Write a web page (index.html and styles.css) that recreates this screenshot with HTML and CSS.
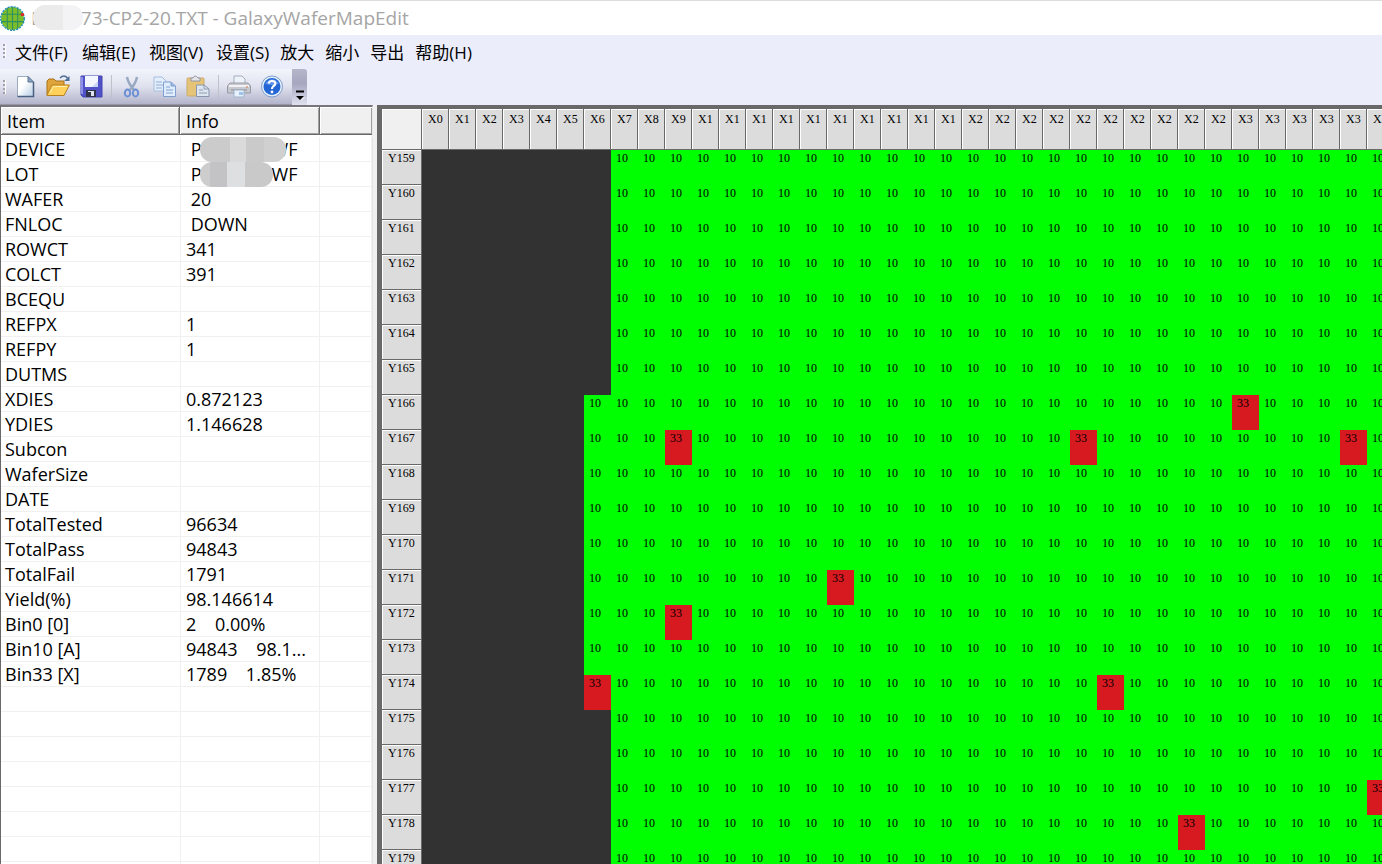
FILE: index.html
```html
<!DOCTYPE html>
<html lang="zh-CN">
<head>
    <meta charset="UTF-8">
    <meta name="viewport" content="width=device-width, initial-scale=1.0">
    <title>GalaxyWaferMapEdit</title>
    <link rel="stylesheet" href="styles.css">
</head>
<body>

    <header class="titlebar">
        <svg class="logo" viewBox="0 0 24 24">
            <circle cx="12" cy="12" r="11" fill="#79bd2b"/>
            <path d="M7 2V22M12 1V23M17 2V22M2 8H22M1 15H23" stroke="#2f8f62" stroke-width="1" fill="none"/>
            <circle cx="12" cy="12" r="11.3" fill="none" stroke="#1687b8" stroke-width="1.2" stroke-dasharray="2 1"/>
            <rect x="20" y="7" width="3" height="2.5" fill="#e02020"/>
        </svg>
        <h1>D<span class="hidden-name"></span>73-CP2-20.TXT - GalaxyWaferMapEdit</h1>
    </header>

    <nav class="menubar">
        <span class="grip"></span>
        <button class="wide">文件(F)</button>
        <button class="wide">编辑(E)</button>
        <button class="wide">视图(V)</button>
        <button>设置(S)</button>
        <button>放大</button>
        <button>缩小</button>
        <button>导出</button>
        <button>帮助(H)</button>
    </nav>

    <div class="toolbar-row">
        <div class="toolbar">
            <span class="grip"></span>
            <div class="group">
                <button aria-label="新建">
                    <svg viewBox="0 0 24 24">
                        <defs><linearGradient id="page" x1="0" y1="0" x2="1" y2="1"><stop offset=".4" stop-color="#fff"/><stop offset="1" stop-color="#b4cce4"/></linearGradient></defs>
                        <path d="M4.500 1.500H15L20.500 7V21.500H4.500Z" fill="url(#page)" stroke="#9aabc2"/>
                        <path d="M20.500 7V21.500H4.500" fill="none" stroke="#4a6080" stroke-width="1.500"/>
                        <path d="M15 1.500V7H20.500Z" fill="#8da9c8" stroke="#56708f"/>
                    </svg>
                </button>
                <button aria-label="打开">
                    <svg viewBox="0 0 24 24">
                        <path d="M1 20V6L3 4H8L10 6H18V20Z" fill="#dfa43b" stroke="#a77316"/>
                        <path d="M1 20L6 10H23.500L18 20.500H1Z" fill="#ffd05a" stroke="#b9801e"/>
                        <path d="M4 18L7.500 11.500H21" stroke="#fff0ad" fill="none"/>
                        <path d="M14 3Q18 -1 21.500 3" fill="none" stroke="#526f96" stroke-width="1.500"/>
                        <path d="M23.500 1V6H18Z" fill="#526f96"/>
                    </svg>
                </button>
                <button aria-label="保存">
                    <svg viewBox="0 0 24 24">
                        <path d="M2 1H23V22H4L2 20Z" fill="#5152c8" stroke="#4344b0"/>
                        <path d="M3 2V19" stroke="#8c90ec" stroke-width="2"/>
                        <rect x="6" y="1" width="13" height="11" fill="#f3f7ff"/>
                        <path d="M13 12L19 6V12Z" fill="#c8d8f4"/>
                        <rect x="7" y="15" width="10" height="7" fill="#303448"/>
                        <rect x="9" y="16" width="6" height="5" fill="#dfe5ef"/>
                        <rect x="9" y="17" width="3" height="4" fill="#303448"/>
                    </svg>
                </button>
            </div>
            <span class="separator"></span>
            <div class="group">
                <button aria-label="剪切">
                    <svg viewBox="0 0 24 24">
                        <path d="M7 2Q8 8 14 15M17 2Q16 8 10 15" stroke="#99a9c1" stroke-width="2.500" fill="none"/>
                        <ellipse cx="7.500" cy="18" rx="2.700" ry="3.500" fill="none" stroke="#6d91d4" stroke-width="2"/>
                        <ellipse cx="15.500" cy="18" rx="2.700" ry="3.500" fill="none" stroke="#6d91d4" stroke-width="2"/>
                    </svg>
                </button>
                <button aria-label="复制">
                    <svg viewBox="0 0 24 24">
                        <path d="M1 2H9L13 6V16H1Z" fill="#e5effc" stroke="#a5bcdf"/>
                        <path d="M3 7H9M3 10H10M3 13H9" stroke="#8eabd7"/>
                        <path d="M10.500 7H18L22.500 11V21.500H10.500Z" fill="#e0edfc" stroke="#7f9fce"/>
                        <path d="M18 7V11H22.500" fill="#9bb7de" stroke="#7f9fce"/>
                        <path d="M13 12H17M13 15H20M13 18H20" stroke="#80a2d3"/>
                    </svg>
                </button>
                <button aria-label="粘贴">
                    <svg viewBox="0 0 24 24">
                        <rect x="1" y="3" width="17" height="18" rx="1" fill="#e5c477" stroke="#c9ab6d"/>
                        <path d="M5 6V3H7Q9 -1 12 3H14V6Z" fill="#e3e5e8" stroke="#9398a4"/>
                        <path d="M10.500 10H18L23 14V21.500H10.500Z" fill="#dce5f0" stroke="#8795ad"/>
                        <path d="M18 10V14H23M13 15H17M13 18H21" stroke="#8e9cb2" fill="none"/>
                    </svg>
                </button>
            </div>
            <span class="separator"></span>
            <div class="group">
                <button aria-label="打印">
                    <svg viewBox="0 0 24 24">
                        <path d="M7 9V1H15L18 4V9Z" fill="#eef3fa" stroke="#a4adba"/>
                        <path d="M3 8H21L23.500 11V18H.500V11Z" fill="#c8c9cf" stroke="#969aa5"/>
                        <path d="M2 11H22" stroke="#f2f2f4" stroke-width="2"/>
                        <path d="M4 15H20" stroke="#858996"/>
                        <path d="M7 15H17V22H7Z" fill="#e6f1fc" stroke="#a0b2cb"/>
                        <rect x="12" y="17" width="4" height="3" fill="#9fc4e8"/>
                        <circle cx="20" cy="12" r="1" fill="#d29a75"/>
                    </svg>
                </button>
                <button aria-label="帮助">
                    <svg viewBox="0 0 24 24">
                        <circle cx="12" cy="11.500" r="10.500" fill="#e4effc" stroke="#7c9dcd"/>
                        <circle cx="12" cy="11.500" r="8.500" fill="#2467d4"/>
                        <path d="M5 8.500Q12 0 19 8.500Q12 11.500 5 8.500" fill="#5b94eb"/>
                        <path d="M8.800 8.500Q9 6 12 6Q15.500 6 15.300 8.800Q15 10.500 13 11.500Q12 12.300 12 14" fill="none" stroke="#fff" stroke-width="2.200"/>
                        <circle cx="12" cy="17" r="1.400" fill="#fff"/>
                    </svg>
                </button>
            </div>
        </div>
        <button class="more" aria-label="工具栏选项">
            <svg viewBox="0 0 10 12"><path d="M1 1.500H9" stroke="#000" stroke-width="2"/><path d="M1 6H9L5 10Z" fill="#000"/><path d="M6 10.500L9.500 7" stroke="#fff"/></svg>
        </button>
    </div>

    <main>
        <section class="info-panel">
            <table class="info">
                <thead>
                    <tr><th>Item</th><th>Info</th><th></th></tr>
                </thead>
                <tbody>
                    <tr><td>DEVICE</td><td>&nbsp;P<span class="mask"></span>WF</td><td></td></tr>
                    <tr><td>LOT</td><td>&nbsp;P<span class="mask short"></span>WF</td><td></td></tr>
                    <tr><td>WAFER</td><td>&nbsp;20</td><td></td></tr>
                    <tr><td>FNLOC</td><td>&nbsp;DOWN</td><td></td></tr>
                    <tr><td>ROWCT</td><td>341</td><td></td></tr>
                    <tr><td>COLCT</td><td>391</td><td></td></tr>
                    <tr><td>BCEQU</td><td></td><td></td></tr>
                    <tr><td>REFPX</td><td>1</td><td></td></tr>
                    <tr><td>REFPY</td><td>1</td><td></td></tr>
                    <tr><td>DUTMS</td><td></td><td></td></tr>
                    <tr><td>XDIES</td><td>0.872123</td><td></td></tr>
                    <tr><td>YDIES</td><td>1.146628</td><td></td></tr>
                    <tr><td>Subcon</td><td></td><td></td></tr>
                    <tr><td>WaferSize</td><td></td><td></td></tr>
                    <tr><td>DATE</td><td></td><td></td></tr>
                    <tr><td>TotalTested</td><td>96634</td><td></td></tr>
                    <tr><td>TotalPass</td><td>94843</td><td></td></tr>
                    <tr><td>TotalFail</td><td>1791</td><td></td></tr>
                    <tr><td>Yield(%)</td><td>98.146614</td><td></td></tr>
                    <tr><td>Bin0 [0]</td><td>2&nbsp;&nbsp;&nbsp;&nbsp;0.00%</td><td></td></tr>
                    <tr><td>Bin10 [A]</td><td>94843&nbsp;&nbsp;&nbsp;&nbsp;98.1...</td><td></td></tr>
                    <tr><td>Bin33 [X]</td><td>1789&nbsp;&nbsp;&nbsp;&nbsp;1.85%</td><td></td></tr>
                    <tr><td></td><td></td><td></td></tr>
                    <tr><td></td><td></td><td></td></tr>
                    <tr><td></td><td></td><td></td></tr>
                    <tr><td></td><td></td><td></td></tr>
                    <tr><td></td><td></td><td></td></tr>
                    <tr><td></td><td></td><td></td></tr>
                    <tr><td></td><td></td><td></td></tr>
                    <tr><td></td><td></td><td></td></tr>
                </tbody>
            </table>
        </section>

        <section class="map-panel">
            <table class="wafer" id="wafer"></table>
        </section>
    </main>

    <script src="wafer.js"></script>
</body>
</html>
```

FILE: styles.css
```css
* {
    box-sizing: border-box;
}

body {
    font-family: "Open Sans", "Noto Sans CJK SC", sans-serif;
    margin: 0;
    height: 100vh;
    display: flex;
    flex-direction: column;
    overflow: hidden;
    background-color: #ebedfa;
    color: #000;
}

button {
    border: 0;
    padding: 0;
    background: none;
    font: inherit;
    color: inherit;
}

svg {
    display: block;
}

.titlebar {
    height: 35px;
    flex: none;
    display: flex;
    align-items: center;
    gap: 6px;
    background-color: #fff;
    border-top: 1px solid #dcdcdc;
}

.logo {
    width: 25px;
    height: 25px;
}

.titlebar h1 {
    margin: 0;
    font-size: 19px;
    font-weight: normal;
    color: #a5a5a5;
    white-space: nowrap;
}

.hidden-name {
    display: inline-block;
    position: relative;
    width: 36px;
}

.hidden-name::before {
    content: "";
    position: absolute;
    left: -12px;
    top: -20px;
    width: 50px;
    height: 25px;
    border-radius: 12px;
    background: linear-gradient(to right, #ebebeb 60%, #f3f3f5 60%);
}

.menubar {
    height: 34px;
    flex: none;
    display: flex;
    align-items: center;
    padding-bottom: 2px;
    font-size: 17px;
}

.menubar .grip {
    margin-right: 9px;
}

.menubar button {
    white-space: nowrap;
    text-align: left;
    margin-right: 11px;
}

.menubar .wide {
    width: 67px;
    margin-right: 0;
}

.grip {
    width: 3px;
    height: 14px;
    margin-left: 3px;
    background: repeating-linear-gradient(#a0a0a8 0 2px, transparent 2px 4px);
    border-right: 1px solid #fff;
}

.toolbar-row {
    height: 36px;
    flex: none;
    display: flex;
}

.toolbar {
    display: flex;
    align-items: center;
    width: 292px;
    background: linear-gradient(#f3f5fc, #dfe1ee 50%, #b3b4cb);
    border-bottom: 1px solid #9797a7;
}

.toolbar .group {
    display: flex;
    gap: 9px;
}

.toolbar .grip + .group {
    margin-left: 7px;
}

.toolbar svg {
    width: 24px;
    height: 24px;
}

.separator {
    width: 1px;
    height: 23px;
    margin: 0 8px;
    background-color: #bfc0c8;
}

.more {
    width: 15px;
    display: flex;
    align-items: flex-end;
    justify-content: center;
    padding-bottom: 3px;
    background: linear-gradient(#b5b6c9, #a6a7c0 40%, #dfe0ef);
    border-radius: 0 3px 0 0;
}

.more svg {
    width: 10px;
    height: 12px;
}

main {
    flex: 1;
    min-height: 0;
    display: flex;
    gap: 4px;
    background-color: #f0f0f0;
}

.info-panel {
    width: 373px;
    flex: none;
    overflow: hidden;
    background-color: #fff;
    border-top: 2px solid #77777b;
    border-left: 1px solid #696969;
    border-right: 1px solid #e6e6e6;
}

.info {
    width: 100%;
    table-layout: fixed;
    border-collapse: separate;
    border-spacing: 0;
    font-size: 18px;
    line-height: 24px;
}

/* small gap between the header and the first row */
.info tbody::before {
    content: "";
    display: block;
    height: 2px;
}

.info th {
    height: 28px;
    padding: 0 6px;
    background-color: #f0f0f0;
    border-right: 1px solid #696969;
    border-bottom: 1px solid #696969;
    box-shadow: inset 1px 1px #fff, inset -1px -1px #a0a0a0;
    font-weight: normal;
    text-align: left;
}

.info th:nth-child(1) {
    width: 179px;
}

.info th:nth-child(2) {
    width: 140px;
}

.info th:last-child {
    border-right: 0;
}

.info td {
    height: 25px;
    padding: 0 4px;
    border-right: 1px solid #f0f0f0;
    border-bottom: 1px solid #f0f0f0;
    white-space: nowrap;
}

.info td:first-child {
    border-right: 0;
}

.info td:nth-child(2) {
    padding-left: 5px;
    border-left: 1px solid #f0f0f0;
}

.mask {
    display: inline-block;
    position: relative;
    width: 70px;
}

/* smudges over the customer's device and lot names */
.mask::before {
    content: "";
    position: absolute;
    left: -2px;
    top: -19px;
    width: 86px;
    height: 25px;
    border-radius: 12px;
    background: linear-gradient(to right, #cbcbcb 30px, #dadada 30px 46px, #cacaca 46px 64px, #d0d0d0 64px);
}

.mask.short::before {
    width: 73px;
    background: linear-gradient(to right, #cdcdcd 10px, #c3c3c5 10px 27px, #dddfe1 27px 45px, #c9c9c9 45px);
}

.map-panel {
    flex: 1;
    min-width: 0;
    overflow: hidden;
    background-color: #fff;
    border-top: 4px solid #696969;
    border-left: 5px solid #696969;
}

.wafer {
    table-layout: fixed;
    border-collapse: separate;
    border-spacing: 0;
    font-family: "Liberation Serif", serif;
    font-size: 12px;
    line-height: 16px;
}

.wafer th,
.wafer td {
    padding: 0 0 0 5px;
    height: 35px;
    vertical-align: top;
    text-align: left;
    font-weight: normal;
}

.wafer th {
    padding-left: 6px;
    background-color: #dcdcdc;
    border-right: 1px solid #696969;
    border-bottom: 1px solid #696969;
    box-shadow: inset 1px 1px #fff;
}

.wafer thead th {
    width: 27px;
    height: 41px;
    padding-top: 2px;
}

.wafer thead .corner {
    width: 40px;
    background-color: #f0f0f0;
}

.wafer .pass {
    background-color: #00ff00;
}

.wafer .fail {
    background-color: #d71920;
}

.wafer .none {
    background-color: #323232;
}
```

FILE: wafer.js
```js
const COLUMNS = 36;
const FIRST_ROW = 159;
const LAST_ROW = 179;

// failed dies: row number -> columns
const fails = {
    166: [30],
    167: [9, 24, 34],
    171: [15],
    172: [9],
    174: [6, 25],
    177: [35],
    178: [28]
};

let html = '<thead><tr><th class="corner"></th>';
for (let x = 0; x < COLUMNS; x++) {
    html += `<th>${("X" + x).slice(0, 2)}</th>`;
}
html += "</tr></thead><tbody>";

for (let y = FIRST_ROW; y <= LAST_ROW; y++) {
    const start = y >= 166 && y <= 174 ? 6 : 7;
    html += `<tr><th>Y${y}</th>`;
    for (let x = 0; x < COLUMNS; x++) {
        if (x < start) {
            html += '<td class="none"></td>';
        } else if (fails[y] && fails[y].includes(x)) {
            html += '<td class="fail">33</td>';
        } else {
            html += '<td class="pass">10</td>';
        }
    }
    html += "</tr>";
}

const wafer = document.getElementById("wafer");
wafer.innerHTML = html + "</tbody>";
wafer.style.width = 40 + COLUMNS * 27 + "px";
```
